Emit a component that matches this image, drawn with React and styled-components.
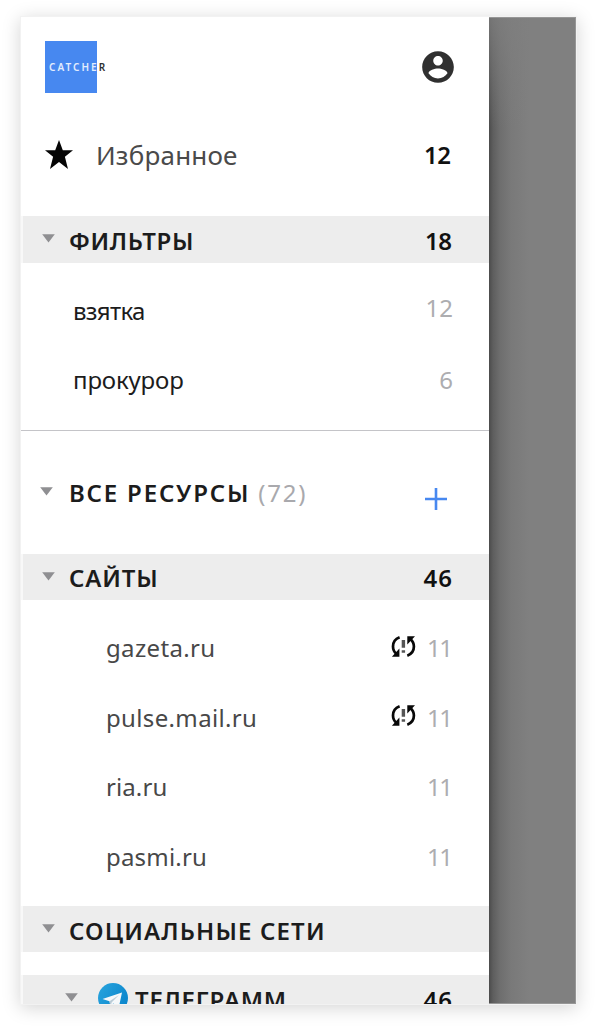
import React from "react";
import styled, { createGlobalStyle } from "styled-components";

const GlobalStyle = createGlobalStyle`
  * { box-sizing: border-box; }
  body {
    margin: 0;
    background: #fff;
    font-family: "Noto Sans", "Open Sans", sans-serif;
  }
`;

const Page = styled.div`
  height: 1028px;
  padding: 17px 21px 25px;
`;

const Device = styled.div`
  display: flex;
  width: 555px;
  height: 987px;
  overflow: hidden;
  background: #808080;
  outline: 1px solid #f2f2f2;
  box-shadow: 0 3px 17px 1px rgba(0, 0, 0, 0.17);
`;

const Drawer = styled.aside`
  display: flex;
  flex-direction: column;
  flex: none;
  width: 468px;
  height: 100%;
  overflow: hidden;
  background: #fff;
`;

const Backdrop = styled.div`
  flex: 1;
  border: 1px solid #969696;
  border-left: 0;
  background:
    linear-gradient(to bottom, rgba(128, 128, 128, 0.75), rgba(128, 128, 128, 0) 110px),
    linear-gradient(to right, #4b4b4b 0, #5e5e5e 4px, #6e6e6e 11px, #797979 22px, #808080 40px);
`;

const Header = styled.header`
  display: flex;
  flex: none;
  align-items: center;
  justify-content: space-between;
  height: 100px;
  padding: 0 34px 0 24px;
`;

const Logo = styled.div`
  display: flex;
  align-items: center;
  width: 52px;
  height: 52px;
  padding-left: 4px;
  background: #4788f0;
  color: #e3edfd;
  font-size: 10px;
  font-weight: 600;
  letter-spacing: 2.05px;
  white-space: nowrap;
`;

const LogoTail = styled.span`
  color: #303030;
`;

const Row = styled.div`
  display: flex;
  flex: none;
  align-items: center;
  height: ${(p) => p.$height}px;
  padding: 0 36px 0 ${(p) => p.$indent}px;
`;

const SectionBar = styled(Row)`
  height: 46.5px;
  border-left: 2px solid #f8f8f8;
  background: #ededed;
`;

const Group = styled.div`
  flex: none;
  padding: ${(p) => p.$padding};
  border-bottom: ${(p) => (p.$ruled ? "1px solid #c4c4c8" : "0")};
`;

const Label = styled.span`
  flex: 1;
  position: relative;
  top: ${(p) => p.$shift || 0}px;
  color: ${(p) => p.$color || "#1c1c1c"};
  font-size: ${(p) => p.$size || 24}px;
  line-height: 34px;
  letter-spacing: ${(p) => p.$spacing || 0}px;
  white-space: nowrap;
`;

const Heading = styled(Label)`
  font-weight: 570;
`;

const Total = styled.span`
  color: #a9a9ad;
  font-weight: 400;
`;

const Count = styled.span`
  position: relative;
  top: ${(p) => p.$shift || 0}px;
  color: ${(p) => (p.$strong ? "#111" : "#adadb0")};
  font-size: 24px;
  font-weight: ${(p) => (p.$strong ? 570 : 400)};
  line-height: 34px;
  letter-spacing: ${(p) => p.$spacing || 0}px;
  margin-right: ${(p) => (p.$inset || 0) - (p.$spacing || 0)}px;
`;

const Icon = styled.svg`
  display: block;
  flex: none;
  margin: ${(p) => p.$margin || 0};
`;

const Caret = ({ margin }) => (
  <Icon width="13" height="9" viewBox="0 0 13 9" $margin={margin}>
    <path d="M0.2 0.2H12.8L6.5 8.6Z" fill="#8f8f92" />
  </Icon>
);

const Account = () => (
  <Icon width="38" height="38" viewBox="0 0 24 24" $margin="0 -2px 0 0">
    <path
      fill="#303030"
      d="M12 2C6.48 2 2 6.48 2 12s4.48 10 10 10 10-4.48 10-10S17.52 2 12 2zm0 3c1.66 0 3 1.34 3 3s-1.34 3-3 3-3-1.34-3-3 1.34-3 3-3zm0 14.2c-2.5 0-4.71-1.28-6-3.22.03-1.99 4-3.08 6-3.08 1.99 0 5.97 1.09 6 3.08-1.29 1.94-3.5 3.22-6 3.22z"
    />
  </Icon>
);

const Star = () => (
  <Icon width="28" height="29" viewBox="0 0 28 28" $margin="-3px 23px 0 0" preserveAspectRatio="none">
    <path
      fill="#050505"
      d="M14 0 17.8 9.8H28L19.9 16.2 23 28 14 21.3 5 28 8.1 16.2 0 9.8H10.2Z"
    />
  </Icon>
);

const Plus = () => (
  <Icon width="22" height="22" viewBox="0 0 22 22" $margin="13px 6px 0 0">
    <path d="M11 0V22M0 11H22" stroke="#4788f0" strokeWidth="2.6" />
  </Icon>
);

const SyncProblem = () => (
  <Icon width="25" height="23" viewBox="0 0 25 23" $margin="-4px 11px 0 0">
    <path
      d="M8.6 2.2C4.4 3.8 2 7.4 2 11.4c0 3 1.2 5.6 3.6 7.6M16.3 20.8c4.2-1.6 6.6-5.2 6.6-9.2 0-3-1.2-5.6-3.6-7.6"
      fill="none"
      stroke="#080808"
      strokeWidth="2.7"
    />
    <path d="M8.4 13.6V21.7H.9ZM16.3 9.5V1.2H24Z" fill="#080808" />
    <path d="M12.4 5V12.8M12.4 15.3V17.7" stroke="#555" strokeWidth="3.4" />
  </Icon>
);

const Telegram = () => (
  <Icon width="30" height="30" viewBox="0 0 30 30" $margin="-1px 7px 0 20px">
    <defs>
      <linearGradient id="telegram-blue" x1="0" y1="0" x2="1" y2="0.6">
        <stop offset="0" stopColor="#2aa5de" />
        <stop offset="1" stopColor="#0b86cc" />
      </linearGradient>
    </defs>
    <circle cx="15" cy="15" r="15" fill="url(#telegram-blue)" />
    <path d="M4.5 16 24 9.4 20.8 24.4 15.3 20.5 12.4 23.2 11.5 18.2Z" fill="#f5f8fa" />
    <path d="M11.5 18.2 21 12 13.8 19.2 12.4 23.2Z" fill="#b9cbd6" />
  </Icon>
);

const filters = [
  { name: "взятка", count: 12, spacing: -0.7, shift: -3 },
  { name: "прокурор", count: 6, spacing: -0.15, shift: 0 },
];

const sites = [
  { name: "gazeta.ru", count: 11, spacing: 0.35, problem: true },
  { name: "pulse.mail.ru", count: 11, spacing: 0.35, problem: true },
  { name: "ria.ru", count: 11, spacing: 0.1 },
  { name: "pasmi.ru", count: 11, spacing: 0.2 },
];

export default function App() {
  return (
    <>
      <GlobalStyle />
      <Page>
        <Device>
          <Drawer>
            <Header>
              <Logo>
                <span>
                  CATCHE<LogoTail>R</LogoTail>
                </span>
              </Logo>
              <Account />
            </Header>

            <Row $height={78} $indent={24}>
              <Star />
              <Label $size={26} $color="#4a4a4a" $spacing={0.2} $shift={-1}>Избранное</Label>
              <Count $strong $shift={-1} $inset={2} $spacing={-0.5}>12</Count>
            </Row>

            <Group $padding="21px 0 0">
              <SectionBar $indent={19}>
                <Caret margin="-1px 14px 0 0" />
                <Heading $spacing={0.65} $shift={2}>ФИЛЬТРЫ</Heading>
                <Count $strong $shift={2} $inset={1} $spacing={-0.5}>18</Count>
              </SectionBar>
            </Group>

            <Group $padding="13.5px 0 15px" $ruled>
              {filters.map((f) => (
                <Row key={f.name} $height={69.5} $indent={52}>
                  <Label $spacing={f.spacing}>{f.name}</Label>
                  <Count $shift={f.shift}>{f.count}</Count>
                </Row>
              ))}
            </Group>

            <Row $height={122.5} $indent={19}>
              <Caret margin="-1px 16px 0 0" />
              <Heading $spacing={1.8} $shift={0.5}>
                ВСЕ РЕСУРСЫ <Total>(72)</Total>
              </Heading>
              <Plus />
            </Row>

            <SectionBar $indent={19}>
              <Caret margin="-1px 14px 0 0" />
              <Heading $spacing={0.85} $shift={1.5}>САЙТЫ</Heading>
              <Count $strong $spacing={1} $shift={1.5} $inset={1}>46</Count>
            </SectionBar>

            <Group $padding="13.5px 0 14px">
              {sites.map((s) => (
                <Row key={s.name} $height={69.5} $indent={85}>
                  <Label $color="#484848" $spacing={s.spacing} $shift={-0.25}>{s.name}</Label>
                  {s.problem && <SyncProblem />}
                  <Count $spacing={-1.4} $shift={-0.25}>{s.count}</Count>
                </Row>
              ))}
            </Group>

            <SectionBar $indent={19}>
              <Caret margin="-1px 14px 0 0" />
              <Heading $spacing={1.15} $shift={2}>СОЦИАЛЬНЫЕ СЕТИ</Heading>
            </SectionBar>

            <Group $padding="23px 0 0">
              <SectionBar $indent={42}>
                <Caret margin="-1px 0 0" />
                <Telegram />
                <Heading $spacing={0.75} $shift={1.5}>ТЕЛЕГРАММ</Heading>
                <Count $strong $spacing={1} $shift={1.5} $inset={1}>46</Count>
              </SectionBar>
            </Group>
          </Drawer>
          <Backdrop />
        </Device>
      </Page>
    </>
  );
}
